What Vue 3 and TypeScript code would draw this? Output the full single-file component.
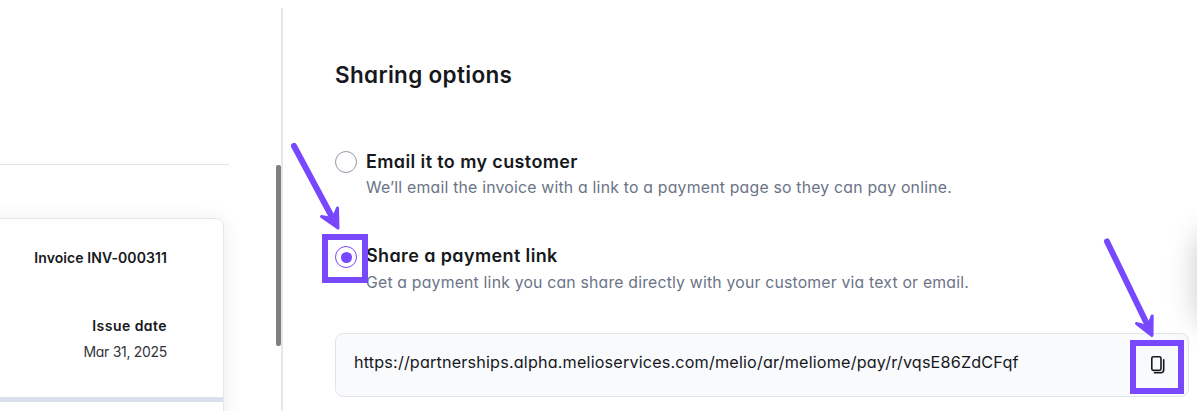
<script setup lang="ts">
import { ref } from 'vue'

interface ShareOption {
  id: string
  title: string
  note: string
}

const options: ShareOption[] = [
  {
    id: 'email',
    title: 'Email it to my customer',
    note: 'We’ll email the invoice with a link to a payment page so they can pay online.',
  },
  {
    id: 'link',
    title: 'Share a payment link',
    note: 'Get a payment link you can share directly with your customer via text or email.',
  },
]
const selected = ref('link')
const link = 'https://partnerships.alpha.melioservices.com/melio/ar/meliome/pay/r/vqsE86ZdCFqf'
</script>

<template>
  <div class="page">
    <aside class="preview">
      <div class="rule"></div>
      <div class="invoice">
        <div class="number">Invoice INV-000311</div>
        <div class="issue">Issue date</div>
        <div class="date">Mar 31, 2025</div>
        <div class="band"></div>
      </div>
      <div class="thumb"></div>
    </aside>
    <main class="panel">
      <h1>Sharing options</h1>
      <div
        v-for="option in options"
        :key="option.id"
        class="option"
        :class="option.id"
        @click="selected = option.id"
      >
        <div class="radio" :class="{ on: selected === option.id }"></div>
        <div class="copy">
          <div class="title">{{ option.title }}</div>
          <div class="note">{{ option.note }}</div>
        </div>
      </div>
      <div class="field">
        <span class="url">{{ link }}</span>
        <svg class="copy-icon" width="16" height="20" viewBox="0 0 16 20" fill="none" stroke="#16181c" stroke-width="1.6">
          <rect x="1.8" y="1.8" width="9.2" height="13.6" rx="1.6" />
          <path d="M13.7 4.8V14.8Q13.7 17.8 10.7 17.8H4.4" stroke-linecap="round" />
        </svg>
      </div>
    </main>
    <div class="edge-shadow"></div>
    <div class="mark mark-radio"></div>
    <div class="mark mark-copy"></div>
    <svg class="arrows" width="1197" height="411" viewBox="0 0 1197 411" fill="#7848ff" stroke="#7848ff" stroke-linejoin="round" stroke-linecap="round">
      <path d="M294 146L332 217" stroke-width="6" />
      <path d="M338 228L321.5 216.5Q327 217 332 219Q335 215 337.500 208Z" stroke-width="3" />
      <path d="M1107 241.5L1147.5 325" stroke-width="6" />
      <path d="M1152 335.500L1136.5 323.5Q1142 324.500 1146.5 327Q1150 323 1152.200 316Z" stroke-width="3" />
    </svg>
  </div>
</template>

<style>
body {
  margin: 0;
  background: #fff;
}
</style>

<style scoped>
.page {
  position: relative;
  display: flex;
  width: 1197px;
  height: 411px;
  overflow: hidden;
  box-sizing: border-box;
  padding-top: 8px;
  background: #fff;
  color: #16181c;
  font-family: Inter, "Liberation Sans", sans-serif;
  font-feature-settings: "cv11";
  white-space: nowrap;
}
.preview {
  position: relative;
  width: 281px;
  height: 403px;
  flex: none;
  overflow: hidden;
  border-right: 2px solid #e3e6eb;
}
.rule {
  width: 229px;
  height: 1px;
  margin-top: 156px;
  background: #e1e3ec;
}
.invoice {
  box-sizing: border-box;
  width: 264px;
  height: 240px;
  margin: 53px 0 0 -40px;
  padding-top: 26px;
  border: 1px solid #e4e6ef;
  border-radius: 8px;
  box-shadow: 0 2px 20px rgba(0, 0, 0, 0.08);
  text-align: right;
}
.number,
.issue,
.date {
  height: 26px;
  padding-right: 56px;
  font-size: 14px;
  line-height: 26px;
}
.number {
  font-weight: 600;
  letter-spacing: 0.08px;
}
.issue {
  margin-top: 42px;
  font-weight: 600;
  letter-spacing: 0.45px;
}
.date {
  color: #33353a;
  letter-spacing: -0.3px;
}
.band {
  height: 5px;
  margin-top: 32px;
  background: #dcdfec;
}
.thumb {
  position: absolute;
  top: 157px;
  right: 0;
  width: 5px;
  height: 181px;
  border-radius: 2px;
  background: #808080;
}
.panel {
  width: 854px;
  margin-left: 52px;
}
h1 {
  height: 34px;
  margin: 50px 0 0;
  font-size: 22.5px;
  font-weight: 600;
  line-height: 34px;
  letter-spacing: 0.32px;
}
.option {
  display: flex;
  gap: 9px;
}
.email {
  margin-top: 57px;
}
.link {
  margin-top: 42px;
}
.radio {
  box-sizing: border-box;
  display: grid;
  place-items: center;
  width: 22px;
  height: 22px;
  margin-top: 2px;
  border: 1px solid #9399aa;
  border-radius: 50%;
}
.radio.on {
  margin-top: 3px;
  border-color: #7848ff;
}
.radio.on::after {
  width: 11px;
  height: 11px;
  border-radius: 50%;
  background: #7848ff;
  content: "";
}
.title {
  height: 26px;
  font-size: 18px;
  font-weight: 600;
  line-height: 26px;
  letter-spacing: 0.38px;
}
.note {
  height: 26px;
  color: #6b7487;
  font-size: 15.8px;
  line-height: 26px;
  letter-spacing: 0.21px;
}
.link .note {
  padding-top: 1px;
  letter-spacing: 0.19px;
}
.field {
  box-sizing: border-box;
  display: flex;
  align-items: center;
  justify-content: space-between;
  width: 854px;
  height: 64px;
  margin-top: 37px;
  padding: 0 22px 0 18px;
  border: 1px solid #e1e4e8;
  border-radius: 8px;
  background: #f9fafc;
}
.url {
  margin-top: -6px;
  font-size: 16.2px;
  letter-spacing: 0.165px;
}
.edge-shadow {
  position: absolute;
  top: 234px;
  left: 1200px;
  width: 60px;
  height: 88px;
  border-radius: 10px;
  box-shadow: 0 0 32px rgba(0, 0, 0, 0.26);
}
.mark {
  position: absolute;
  box-sizing: border-box;
  border: 6px solid #7848ff;
}
.mark-radio {
  top: 234px;
  left: 322px;
  width: 46px;
  height: 49px;
}
.mark-copy {
  top: 340px;
  left: 1130px;
  width: 54px;
  height: 54px;
}
.arrows {
  position: absolute;
  top: 0;
  left: 0;
}
</style>
